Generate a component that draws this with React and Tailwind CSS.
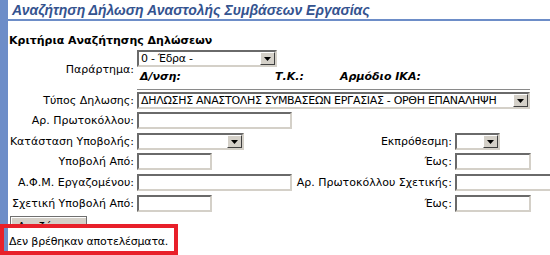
import React from 'react';

const font = { fontFamily: '"DejaVu Sans", Verdana, Tahoma, sans-serif' };

function Select({ w, text }) {
    return (
        <div className={`flex h-[17px] shrink-0 ${w} border-2 border-t-[#6a6a6a] border-l-[#6a6a6a] border-b-[#d4d0c8] border-r-[#d4d0c8] bg-white`}>
            <div className="flex-1 overflow-hidden whitespace-nowrap pl-[2px] leading-[13px] tracking-[-0.3px]">{text}</div>
            <div className="flex w-[15px] items-center justify-center border border-t-white border-l-white border-b-[#404040] border-r-[#404040] bg-[#d4d0c8]">
                <svg width="7" height="4" viewBox="0 0 7 4">
                    <path d="M0 0h7L3.5 4z" fill="#000" />
                </svg>
            </div>
        </div>
    );
}

function Input({ w }) {
    return <div className={`h-[17px] shrink-0 ${w} border-2 border-t-[#6a6a6a] border-l-[#6a6a6a] border-b-[#d4d0c8] border-r-[#d4d0c8] bg-white`} />;
}

function Row({ label, mt, children, rightLabel, right }) {
    return (
        <div className={`flex h-[17px] items-center ${mt}`}>
            <div className="w-[129px] shrink-0 whitespace-nowrap pr-[3px] text-right">{label}</div>
            {rightLabel ? (
                <>
                    <div className="flex w-[318px] shrink-0 items-center">
                        {children}
                        <div className="flex-1 whitespace-nowrap pr-[3px] text-right">{rightLabel}</div>
                    </div>
                    {right}
                </>
            ) : (
                children
            )}
        </div>
    );
}

export default function App() {
    return (
        <div className="relative flex h-[255px] w-[550px] overflow-hidden bg-white text-[11px] leading-[14px] text-black" style={font}>
            <div className="w-2 shrink-0 bg-[#6d8dc8]" />
            <div className="flex-1">
                <div className="h-[21px] whitespace-nowrap border-b-2 border-[#6d8dc8] pl-1 pt-[2px] font-['Liberation_Sans',Arial,sans-serif] text-[14px] font-bold italic leading-[16px] text-[#34538f]">
                    Αναζήτηση Δήλωση Αναστολής Συμβάσεων Εργασίας
                </div>
                <div className="mt-[13px] pl-[1px] font-bold">Κριτήρια Αναζήτησης Δηλώσεων</div>

                <div className="mt-[2px] flex items-center">
                    <div className="w-[129px] shrink-0 pr-[3px] text-right">Παράρτημα:</div>
                    <div className="flex flex-col">
                        <Select w="w-[140px]" text="0 - Έδρα -" />
                        <div className="mt-[3px] flex pl-[3px] font-bold italic">
                            <span className="w-[135px]">Δ/νση:</span>
                            <span className="w-[65px]">Τ.Κ.:</span>
                            <span>Αρμόδιο ΙΚΑ:</span>
                        </div>
                        <div className="mt-[5px] h-px w-[393px] bg-[#8a8a8a]" />
                    </div>
                </div>

                <Row label="Τύπος Δηλωσης:" mt="mt-[2px]">
                    <Select w="w-[393px]" text="ΔΗΛΩΣΗΣ ΑΝΑΣΤΟΛΗΣ ΣΥΜΒΑΣΕΩΝ ΕΡΓΑΣΙΑΣ - ΟΡΘΗ ΕΠΑΝΑΛΗΨΗ" />
                </Row>
                <Row label="Αρ. Πρωτοκόλλου:" mt="mt-[3px]">
                    <Input w="w-[155px]" />
                </Row>
                <Row label="Κατάσταση Υποβολής:" mt="mt-[4px]" rightLabel="Εκπρόθεσμη:" right={<Select w="w-[45px]" text="" />}>
                    <Select w="w-[107px]" text="" />
                </Row>
                <Row label="Υποβολή Από:" mt="mt-[3px]" rightLabel="Έως:" right={<Input w="w-[76px]" />}>
                    <Input w="w-[75px]" />
                </Row>
                <Row label="Α.Φ.Μ. Εργαζομένου:" mt="mt-[4px]" rightLabel="Αρ. Πρωτοκόλλου Σχετικής:" right={<Input w="w-[155px]" />}>
                    <Input w="w-[155px]" />
                </Row>
                <Row label="Σχετική Υποβολή Από:" mt="mt-[4px]" rightLabel="Έως:" right={<Input w="w-[76px]" />}>
                    <Input w="w-[75px]" />
                </Row>

                <div className="mt-[4px] h-[10px] overflow-hidden pl-[2px]">
                    <button className="h-[21px] w-[77px] border border-[#6f6f6f] bg-[#d4d0c8] leading-[14px] shadow-[inset_1px_1px_0_#fff]">
                        Αναζήτηση
                    </button>
                </div>
                <div className="mt-[9px] pl-[1px] tracking-[-0.2px]">Δεν βρέθηκαν αποτελέσματα.</div>
            </div>
            <div className="absolute left-0 top-[224px] h-[31px] w-[178px] border-4 border-[#e8202a]" />
        </div>
    );
}
